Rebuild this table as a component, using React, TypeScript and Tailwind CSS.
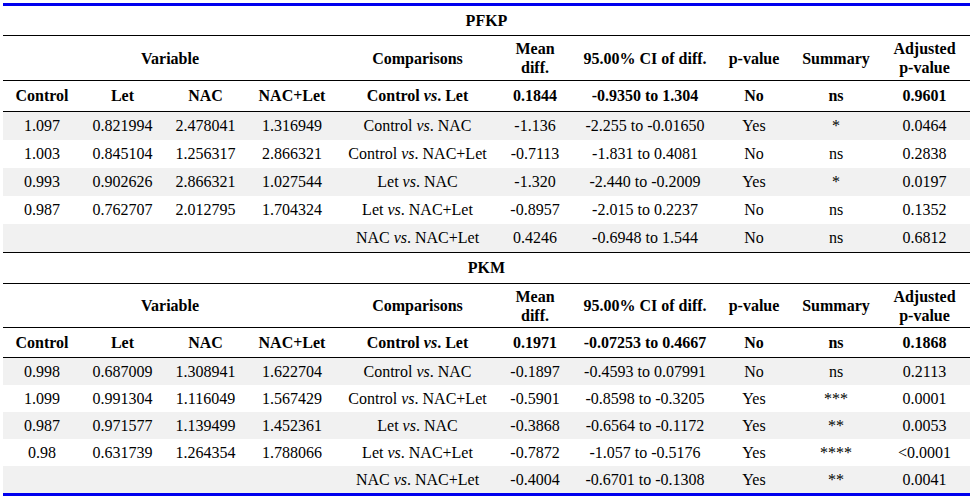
import React from "react";

const cols = "grid grid-cols-[78px_83px_83px_90px_161px_74px_146px_72px_92px_85px]";

type Row = {
  v: string[];
  cmp: [string, string];
  md: string;
  ci: string;
  p: string;
  s: string;
  adj: string;
};

const Cmp = ({ a, b }: { a: string; b: string }) => (
  <span className="whitespace-nowrap">
    {a} <i>vs</i>. {b}
  </span>
);

type Section = {
  title: string;
  heights: { title: string; head: string; ctrl: string; data: string };
  first: Row;
  rows: Row[];
};

const sections: Section[] = [
  {
    title: "PFKP",
    heights: { title: "h-[30px]", head: "h-[45px]", ctrl: "h-[31px]", data: "h-[28px]" },
    first: { v: [], cmp: ["Control", "Let"], md: "0.1844", ci: "-0.9350 to 1.304", p: "No", s: "ns", adj: "0.9601" },
    rows: [
      { v: ["1.097", "0.821994", "2.478041", "1.316949"], cmp: ["Control", "NAC"], md: "-1.136", ci: "-2.255 to -0.01650", p: "Yes", s: "*", adj: "0.0464" },
      { v: ["1.003", "0.845104", "1.256317", "2.866321"], cmp: ["Control", "NAC+Let"], md: "-0.7113", ci: "-1.831 to 0.4081", p: "No", s: "ns", adj: "0.2838" },
      { v: ["0.993", "0.902626", "2.866321", "1.027544"], cmp: ["Let", "NAC"], md: "-1.320", ci: "-2.440 to -0.2009", p: "Yes", s: "*", adj: "0.0197" },
      { v: ["0.987", "0.762707", "2.012795", "1.704324"], cmp: ["Let", "NAC+Let"], md: "-0.8957", ci: "-2.015 to 0.2237", p: "No", s: "ns", adj: "0.1352" },
      { v: ["", "", "", ""], cmp: ["NAC", "NAC+Let"], md: "0.4246", ci: "-0.6948 to 1.544", p: "No", s: "ns", adj: "0.6812" },
    ],
  },
  {
    title: "PKM",
    heights: { title: "h-[31px]", head: "h-[44px]", ctrl: "h-[30px]", data: "h-[27px]" },
    first: { v: [], cmp: ["Control", "Let"], md: "0.1971", ci: "-0.07253 to 0.4667", p: "No", s: "ns", adj: "0.1868" },
    rows: [
      { v: ["0.998", "0.687009", "1.308941", "1.622704"], cmp: ["Control", "NAC"], md: "-0.1897", ci: "-0.4593 to 0.07991", p: "No", s: "ns", adj: "0.2113" },
      { v: ["1.099", "0.991304", "1.116049", "1.567429"], cmp: ["Control", "NAC+Let"], md: "-0.5901", ci: "-0.8598 to -0.3205", p: "Yes", s: "***", adj: "0.0001" },
      { v: ["0.987", "0.971577", "1.139499", "1.452361"], cmp: ["Let", "NAC"], md: "-0.3868", ci: "-0.6564 to -0.1172", p: "Yes", s: "**", adj: "0.0053" },
      { v: ["0.98", "0.631739", "1.264354", "1.788066"], cmp: ["Let", "NAC+Let"], md: "-0.7872", ci: "-1.057 to -0.5176", p: "Yes", s: "****", adj: "<0.0001" },
      { v: ["", "", "", ""], cmp: ["NAC", "NAC+Let"], md: "-0.4004", ci: "-0.6701 to -0.1308", p: "Yes", s: "**", adj: "0.0041" },
    ],
  },
];

const Cell = ({ children, className = "" }: { children?: React.ReactNode; className?: string }) => (
  <div className={`flex items-center justify-center text-center ${className}`}>{children}</div>
);

function SectionBlock({ s, last }: { s: Section; last: boolean }) {
  return (
    <div>
      <div className={`${s.heights.title} flex items-center justify-center font-bold border-b border-black`}>{s.title}</div>
      <div className={`${cols} ${s.heights.head} font-bold border-b border-black leading-[19px]`}>
        <Cell className="col-span-4">Variable</Cell>
        <Cell>Comparisons</Cell>
        <Cell>
          Mean
          <br />
          diff.
        </Cell>
        <Cell>95.00% CI of diff.</Cell>
        <Cell>p-value</Cell>
        <Cell>Summary</Cell>
        <Cell>
          Adjusted
          <br />
          p-value
        </Cell>
      </div>
      <div className={`${cols} ${s.heights.ctrl} font-bold border-b border-black`}>
        <Cell>Control</Cell>
        <Cell>Let</Cell>
        <Cell>NAC</Cell>
        <Cell>NAC+Let</Cell>
        <Cell>
          <Cmp a={s.first.cmp[0]} b={s.first.cmp[1]} />
        </Cell>
        <Cell>{s.first.md}</Cell>
        <Cell>{s.first.ci}</Cell>
        <Cell>{s.first.p}</Cell>
        <Cell>{s.first.s}</Cell>
        <Cell>{s.first.adj}</Cell>
      </div>
      <div className={last ? "" : "border-b border-black"}>
        {s.rows.map((r, i) => (
          <div key={i} className={`${cols} ${s.heights.data} ${i % 2 === 0 ? "bg-[#f1f1f1]" : "bg-white"}`}>
            {r.v.map((x, j) => (
              <Cell key={j}>{x}</Cell>
            ))}
            <Cell>
              <Cmp a={r.cmp[0]} b={r.cmp[1]} />
            </Cell>
            <Cell>{r.md}</Cell>
            <Cell>{r.ci}</Cell>
            <Cell>{r.p}</Cell>
            <Cell>{r.s}</Cell>
            <Cell>{r.adj}</Cell>
          </div>
        ))}
      </div>
    </div>
  );
}

export default function App() {
  return (
    <div className="w-[970px] h-[501px] bg-white pt-[3px] pl-[3px] text-[16px] text-black [font-family:'Liberation_Serif','Times_New_Roman',serif]">
      <div className="w-[967px] border-t-[3px] border-b-[3px] border-t-[#0000ee] border-b-[#0000ee]">
        {sections.map((s, i) => (
          <SectionBlock key={s.title} s={s} last={i === sections.length - 1} />
        ))}
      </div>
    </div>
  );
}
